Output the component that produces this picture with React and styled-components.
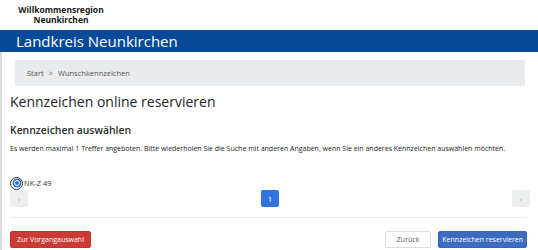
import React from "react";
import styled, { createGlobalStyle } from "styled-components";

const GlobalStyle = createGlobalStyle`
  body {
    margin: 0;
    background: #fff;
    font-family: "Open Sans", "Noto Sans", sans-serif;
    color: #212529;
  }
`;

const Brand = styled.div`
  width: 122px;
  height: 30px;
  display: flex;
  flex-direction: column;
  align-items: center;
  justify-content: center;
  font-family: "Noto Sans", sans-serif;
  font-weight: 700;
  font-size: 8.5px;
  line-height: 10px;
  color: #1a1a1a;
`;

const TopBar = styled.div`
  height: 22px;
  background: #064a98;
  color: #fff;
  display: flex;
  align-items: center;
  padding-left: 16px;
  font-size: 15px;
`;

const Main = styled.main`
  border-left: 2px solid #dcdcdc;
  padding: 8px 8px 0 8px;
  min-height: 190px;
`;

const Breadcrumb = styled.nav`
  margin: 0 5px;
  height: 26px;
  background: #e9ecef;
  display: flex;
  align-items: center;
  padding-left: 12px;
  gap: 5px;
  font-size: 7.5px;
  color: #555;
`;

const Title = styled.h1`
  margin: 5px 0 0;
  font-size: 14px;
  font-weight: 400;
  line-height: 22px;
`;

const Subtitle = styled.h2`
  margin: 9px 0 0;
  font-size: 10.4px;
  font-weight: 600;
  line-height: 16px;
  color: #2a2a2a;
`;

const Text = styled.p`
  margin: 5px 0 0;
  font-size: 7px;
  line-height: 12px;
`;

const Option = styled.label`
  margin-top: 21px;
  display: flex;
  align-items: center;
  gap: 1px;
  font-size: 7.5px;
  color: #333;
  height: 14px;
`;

const Radio = styled.span`
  width: 11px;
  height: 11px;
  border-radius: 50%;
  border: 1.5px solid #3a3a3a;
  display: flex;
  align-items: center;
  justify-content: center;
  &::after {
    content: "";
    width: 4px;
    height: 4px;
    border-radius: 50%;
    background: #2f6fdb;
    border: 1.5px solid #fff;
    box-shadow: 0 0 0 1.5px #2f6fdb;
  }
`;

const Pager = styled.div`
  display: flex;
  justify-content: space-between;
  align-items: center;
  height: 17px;
`;

const PageButton = styled.span`
  width: 18px;
  height: 17px;
  border-radius: 2px;
  display: flex;
  align-items: center;
  justify-content: center;
  font-size: 8px;
  background: ${(p) => (p.$active ? "#2f74de" : "#eceeef")};
  color: ${(p) => (p.$active ? "#fff" : "#aaa")};
`;

const Rule = styled.hr`
  margin: 10px 3px 0 0;
  border: 0;
  border-top: 1px solid #ececec;
`;

const Actions = styled.div`
  margin-top: 13px;
  padding-right: 3px;
  display: flex;
  align-items: center;
  gap: 7px;
`;

const Button = styled.button`
  height: 17px;
  padding: 0 ${(p) => p.$pad || 6}px;
  border-radius: 2px;
  font-family: "Open Sans", sans-serif;
  font-size: 7px;
  border: 1px solid ${(p) => p.$border};
  background: ${(p) => p.$bg};
  color: ${(p) => p.$fg};
  &:first-child {
    margin-right: auto;
  }
`;

export default function App() {
  return (
    <>
      <GlobalStyle />
      <Brand>
        <span>Willkommensregion</span>
        <span>Neunkirchen</span>
      </Brand>
      <TopBar>Landkreis Neunkirchen</TopBar>
      <Main>
        <Breadcrumb>
          <span>Start</span>
          <span>&gt;</span>
          <span>Wunschkennzeichen</span>
        </Breadcrumb>
        <Title>Kennzeichen online reservieren</Title>
        <Subtitle>Kennzeichen auswählen</Subtitle>
        <Text>
          Es werden maximal 1 Treffer angeboten. Bitte wiederholen Sie die Suche mit anderen Angaben, wenn Sie ein anderes Kennzeichen auswählen möchten.
        </Text>
        <Option>
          <Radio />
          NK-Z 49
        </Option>
        <Pager>
          <PageButton>‹</PageButton>
          <PageButton $active>1</PageButton>
          <PageButton>›</PageButton>
        </Pager>
        <Rule />
        <Actions>
          <Button $bg="#cc3a36" $border="#c0342f" $fg="#fff">Zur Vorgangauswahl</Button>
          <Button $bg="#fff" $border="#ddd" $fg="#555" $pad={11}>Zurück</Button>
          <Button $bg="#3e6bbf" $border="#3964b5" $fg="#fff" $pad={3}>Kennzeichen reservieren</Button>
        </Actions>
      </Main>
    </>
  );
}
